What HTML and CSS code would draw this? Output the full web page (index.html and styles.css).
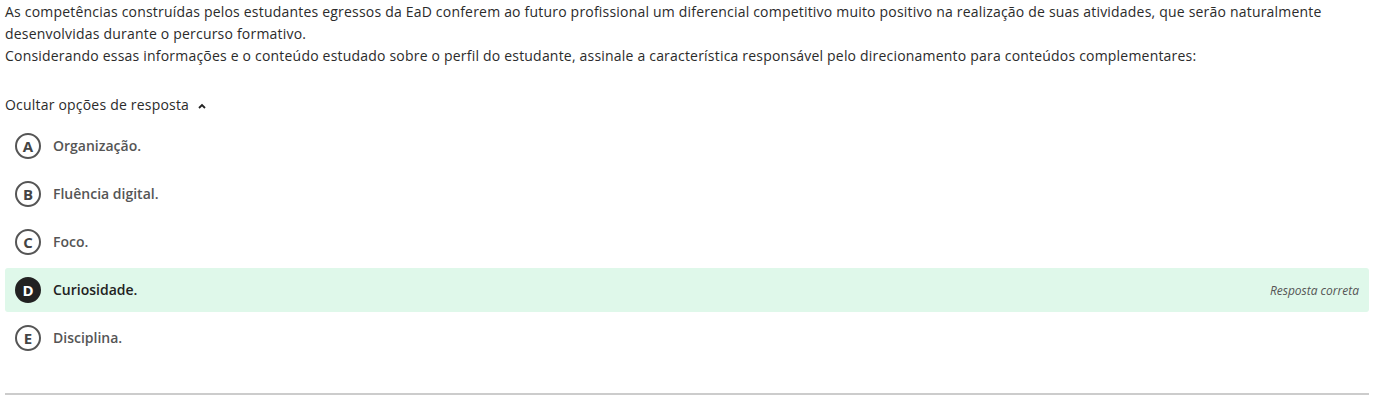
FILE: index.html
```html
<!DOCTYPE html>
<html lang="pt-BR">
<head>
<meta charset="utf-8">
<title>Questão</title>
<link rel="stylesheet" href="styles.css">
</head>
<body>
<div class="question">
  <div class="statement">
    <p>As competências construídas pelos estudantes egressos da EaD conferem ao futuro profissional um diferencial competitivo muito positivo na realização de suas atividades, que serão naturalmente desenvolvidas durante o percurso formativo.</p>
    <p>Considerando essas informações e o conteúdo estudado sobre o perfil do estudante, assinale a característica responsável pelo direcionamento para conteúdos complementares:</p>
  </div>
  <div class="toggle">Ocultar opções de resposta <svg class="chev" width="8" height="6" viewBox="0 0 8 6"><path d="M1 5 L4 2 L7 5" fill="none" stroke="#222" stroke-width="1.8"/></svg></div>
  <ul class="options">
    <li class="option"><span class="letter">A</span><span class="text">Organização.</span></li>
    <li class="option"><span class="letter">B</span><span class="text">Fluência digital.</span></li>
    <li class="option"><span class="letter">C</span><span class="text">Foco.</span></li>
    <li class="option correct"><span class="letter">D</span><span class="text">Curiosidade.</span><span class="status">Resposta correta</span></li>
    <li class="option"><span class="letter">E</span><span class="text">Disciplina.</span></li>
  </ul>
  <hr class="divider">
</div>
</body>
</html>
```
FILE: styles.css
```css
html, body {
  margin: 0;
  padding: 0;
  background: #fff;
}
body {
  font-family: "Open Sans", "Noto Sans", sans-serif;
  font-size: 14px;
  letter-spacing: 0.2px;
  color: #2b2b2b;
}
.question {
  padding: 1px 10px 0 5px;
}
.statement p {
  margin: 0;
  line-height: 22px;
}
.toggle {
  margin-top: 27px;
  line-height: 22px;
  color: #2b2b2b;
  display: flex;
  align-items: center;
  gap: 9px;
}
.chev {
  display: block;
  margin-top: 1px;
}
.options {
  list-style: none;
  margin: 8px 0 0;
  padding: 0;
  display: flex;
  flex-direction: column;
  gap: 4px;
}
.option {
  height: 44px;
  display: flex;
  align-items: center;
  padding: 0 10px 0 10px;
  border-radius: 3px;
}
.letter {
  box-sizing: border-box;
  width: 26px;
  height: 26px;
  border: 2px solid #555;
  border-radius: 50%;
  display: flex;
  align-items: center;
  justify-content: center;
  font-weight: 700;
  font-size: 15px;
  letter-spacing: 0;
  color: #444;
  margin-right: 12px;
}
.text {
  font-weight: 600;
  color: #555;
  letter-spacing: 0;
  flex: 1;
  margin-top: -1px;
}
.correct {
  background: #dff8ea;
}
.correct .letter {
  background: #222;
  border-color: #222;
  color: #fff;
}
.correct .text {
  color: #222;
}
.status {
  font-style: italic;
  font-size: 12px;
  letter-spacing: 0;
  color: #555;
}
.divider {
  margin: 33px 0 0;
  border: 0;
  border-top: 2px solid #ccc;
}
```
